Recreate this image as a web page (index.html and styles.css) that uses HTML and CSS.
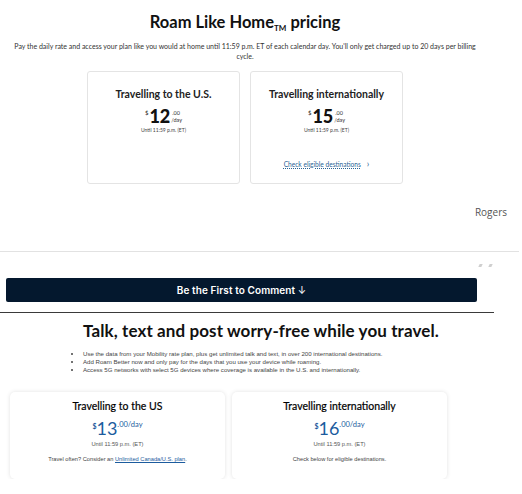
FILE: index.html
```html
<!DOCTYPE html>
<html lang="en">
<head>
<meta charset="utf-8">
<title>Roam Like Home</title>
<link rel="stylesheet" href="styles.css">
</head>
<body>
<section class="rlh">
  <h2 class="rlh-title">Roam Like Home<sub>TM</sub> pricing</h2>
  <p class="rlh-desc">Pay the daily rate and access your plan like you would at home until 11:59 p.m. ET of each calendar day. You'll only get charged up to 20 days per billing cycle.</p>
  <div class="rlh-cards">
    <div class="rlh-card">
      <h3 class="rlh-card-title">Travelling to the U.S.</h3>
      <div class="rlh-price"><span class="rlh-cur">$</span><span class="rlh-amt">12</span><span class="rlh-frac"><span>.00</span><span>/day</span></span></div>
      <p class="rlh-until">Until 11:59 p.m. (ET)</p>
    </div>
    <div class="rlh-card">
      <h3 class="rlh-card-title">Travelling internationally</h3>
      <div class="rlh-price"><span class="rlh-cur">$</span><span class="rlh-amt">15</span><span class="rlh-frac"><span>.00</span><span>/day</span></span></div>
      <p class="rlh-until">Until 11:59 p.m. (ET)</p>
      <a class="rlh-link" href="#">Check eligible destinations</a>
    </div>
  </div>
</section>

<div class="byline">Rogers</div>
<hr class="sep">
<div class="marks"><span class="mark"></span><span class="mark"></span></div>
<div class="comment-wrap">
  <button class="comment-btn" type="button">Be the First to Comment <span class="arrow">↓</span></button>
</div>
<div class="dark-rule"></div>

<section class="talk">
  <h2 class="talk-title">Talk, text and post worry-free while you travel.</h2>
  <ul class="talk-list">
    <li>Use the data from your Mobility rate plan, plus get unlimited talk and text, in over 200 international destinations.</li>
    <li>Add Roam Better now and only pay for the days that you use your device while roaming.</li>
    <li>Access 5G networks with select 5G devices where coverage is available in the U.S. and internationally.</li>
  </ul>
  <div class="talk-cards">
    <div class="talk-card">
      <h3 class="talk-card-title">Travelling to the US</h3>
      <div class="talk-price"><span class="talk-cur">$</span><span class="talk-amt">13</span><span class="talk-frac">.00/day</span></div>
      <p class="talk-until">Until 11:59 p.m. (ET)</p>
      <p class="talk-note">Travel often? Consider an <a href="#">Unlimited Canada/U.S. plan</a>.</p>
    </div>
    <div class="talk-card">
      <h3 class="talk-card-title">Travelling internationally</h3>
      <div class="talk-price"><span class="talk-cur">$</span><span class="talk-amt">16</span><span class="talk-frac">.00/day</span></div>
      <p class="talk-until">Until 11:59 p.m. (ET)</p>
      <p class="talk-note">Check below for eligible destinations.</p>
    </div>
  </div>
</section>
</body>
</html>
```

FILE: styles.css
```css
* { box-sizing: border-box; }
html, body { margin: 0; padding: 0; background: #fff; }
body { font-family: "Lato", "Liberation Sans", sans-serif; color: #1a1a1a; }

.rlh { width: 490px; padding-top: 12px; }
.rlh-title {
  margin: 0;
  text-align: center;
  font-size: 16.5px;
  line-height: 20px;
  font-weight: 700;
  color: #111;
}
.rlh-title sub { font-size: 8px; vertical-align: -3px; line-height: 0; }
.rlh-desc {
  margin: 9px auto 0;
  width: 466px;
  text-align: center;
  font-size: 7px;
  line-height: 10px;
  color: #333;
}
.rlh-cards {
  display: flex;
  justify-content: center;
  gap: 10px;
  margin-top: 10px;
}
.rlh-card {
  width: 153px;
  height: 113px;
  border: 1px solid #e4e4e4;
  border-radius: 3px;
  display: flex;
  flex-direction: column;
  align-items: center;
  padding: 15px 8px 14px;
}
.rlh-card-title {
  margin: 0;
  font-size: 10.5px;
  line-height: 14px;
  font-weight: 700;
  color: #222;
}
.rlh-price {
  display: flex;
  align-items: flex-start;
  margin-top: 5px;
  height: 20px;
}
.rlh-cur { font-size: 6px; line-height: 8px; margin-top: 3px; margin-right: 1px; color: #222; }
.rlh-amt { font-size: 18px; line-height: 20px; font-weight: 900; color: #111; }
.rlh-frac {
  display: flex;
  flex-direction: column;
  font-size: 5.5px;
  line-height: 6.5px;
  margin-left: 1px;
  margin-top: 4px;
  color: #333;
}
.rlh-frac span:first-child { padding-left: 1px; }
.rlh-until { margin: 1px 0 0; font-size: 5px; line-height: 7px; color: #444; }
.rlh-link {
  margin-top: auto;
  font-size: 6.6px;
  line-height: 10px;
  color: #2a6496;
  text-decoration: underline dotted;
  text-underline-offset: 1px;
}
.rlh-link::after {
  content: "›";
  display: inline-block;
  margin-left: 6px;
  font-size: 9px;
  text-decoration: none;
}

.byline {
  margin-top: 21px;
  text-align: right;
  padding-right: 15px;
  font-family: "Open Sans", "Liberation Sans", sans-serif;
  font-size: 10px;
  line-height: 14px;
  color: #555;
}
.sep {
  margin: 32px 0 0;
  width: 519px;
  border: 0;
  border-top: 1px solid #e2e2e2;
  height: 0;
}
.marks {
  display: flex;
  justify-content: flex-end;
  gap: 7px;
  padding-right: 30px;
  margin-top: 12px;
  height: 4px;
}
.mark {
  width: 3px;
  height: 3px;
  background: #cfcfcf;
  transform: skewX(-25deg);
}
.comment-wrap { padding: 10px 0 0 6px; }
.comment-btn {
  display: block;
  width: 471px;
  height: 24px;
  border: 0;
  border-radius: 2px;
  background: #04182e;
  color: #fff;
  font-family: "Inter", "Liberation Sans", sans-serif;
  font-size: 10px;
  font-weight: 600;
  letter-spacing: 0.1px;
}
.comment-btn .arrow { font-weight: 400; }
.dark-rule {
  margin-top: 10px;
  width: 494px;
  height: 1px;
  background: #3a3a3a;
}

.talk { padding: 8px 0 0 10px; }
.talk-title {
  margin: 0 0 0 -10px;
  text-align: center;
  font-family: "Lato", "Liberation Sans", sans-serif;
  font-size: 17px;
  line-height: 20px;
  font-weight: 700;
  color: #111;
  letter-spacing: 0.1px;
}
.talk-list {
  margin: 9px 0 0;
  padding-left: 72px;
  font-family: "Liberation Sans", Arial, sans-serif;
  font-size: 6.1px;
  line-height: 8px;
  color: #444;
}
.talk-list li { padding-left: 1px; }
.talk-cards {
  display: flex;
  gap: 7px;
  margin-top: 18px;
}
.talk-card {
  width: 215px;
  height: 87px;
  border-radius: 5px;
  background: #fff;
  box-shadow: 0 0 4px rgba(0, 0, 0, 0.12);
  display: flex;
  flex-direction: column;
  align-items: center;
  padding-top: 7px;
}
.talk-card-title {
  margin: 0;
  font-family: "Lato", "Liberation Sans", sans-serif;
  font-size: 10.5px;
  line-height: 14px;
  font-weight: 400;
  color: #000;
  -webkit-text-stroke: 0.2px #000;
}
.talk-price {
  display: flex;
  align-items: flex-start;
  margin-top: 5px;
  height: 20px;
  color: #1c5c9e;
  font-family: "Lato", "Liberation Sans", sans-serif;
}
.talk-cur { font-size: 7px; line-height: 9px; margin-top: 4px; font-weight: 700; }
.talk-amt { font-size: 18px; line-height: 20px; }
.talk-frac { font-size: 7.5px; line-height: 9px; margin-top: 2px; }
.talk-until {
  margin: 2px 0 0;
  font-family: "Liberation Sans", Arial, sans-serif;
  font-size: 5.7px;
  line-height: 8px;
  color: #555;
}
.talk-note {
  margin: 7px 0 0;
  font-family: "Liberation Sans", Arial, sans-serif;
  font-size: 5.7px;
  line-height: 8px;
  color: #444;
}
.talk-note a { color: #1c5c9e; text-decoration: underline; }
```
